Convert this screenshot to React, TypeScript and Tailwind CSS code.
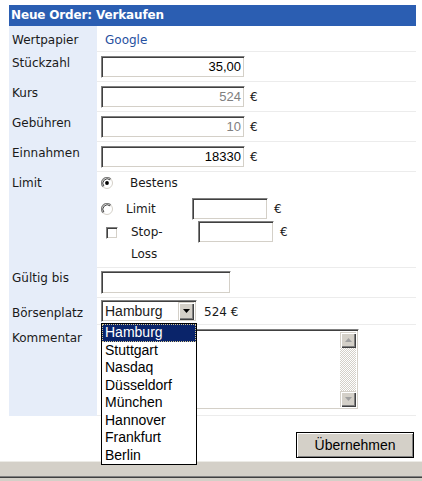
import React from 'react';

// classic inset text box
const Box = ({ className, children }: { className: string; children?: React.ReactNode }) => (
  <div
    className={`border border-t-[#808080] border-l-[#808080] border-b-white border-r-white bg-white shadow-[inset_1px_1px_0_#404040,inset_-1px_-1px_0_#d4d0c8] ${className}`}
  >
    {children}
  </div>
);

const Radio = ({ checked }: { checked?: boolean }) => (
  <svg width="12" height="12" viewBox="0 0 12 12" className="shrink-0">
    <circle cx="6" cy="6" r="5.5" fill="#fff" stroke="#d4d0c8" strokeWidth="1" />
    <path d="M2.1 9.9 A5.5 5.5 0 0 1 9.9 2.1" stroke="#808080" strokeWidth="1.2" fill="none" />
    <path d="M2.9 9.1 A4.4 4.4 0 0 1 9.1 2.9" stroke="#404040" strokeWidth="1" fill="none" />
    {checked && <circle cx="6" cy="6" r="1.9" fill="#000" />}
  </svg>
);

const Label = ({ text, pt }: { text: string; pt: string }) => (
  <div className={`bg-[#e6edf9] pl-[3px] leading-[14px] ${pt}`}>{text}</div>
);

const Arrow = ({ up, color }: { up?: boolean; color: string }) => (
  <svg width="7" height="4" viewBox="0 0 7 4">
    <path d={up ? 'M3.5 0 L7 4 L0 4 Z' : 'M0 0 L7 0 L3.5 4 Z'} fill={color} />
  </svg>
);

const SbButton = ({ up }: { up?: boolean }) => (
  <div className="h-[16px] w-[16px] bg-[#d4d0c8] flex items-center justify-center shadow-[inset_1px_1px_0_#d4d0c8,inset_2px_2px_0_#fff,inset_-1px_-1px_0_#404040,inset_-2px_-2px_0_#808080]">
    <Arrow up={up} color="#a0a0a0" />
  </div>
);

const places = ['Hamburg', 'Stuttgart', 'Nasdaq', 'Düsseldorf', 'München', 'Hannover', 'Frankfurt', 'Berlin'];

export default function App() {
  const num = "font-['Liberation_Sans',Arial,sans-serif] text-[13px] text-right pr-[3px] leading-[20px]";
  return (
    <div className="relative w-[422px] h-[481px] bg-white overflow-hidden font-['DejaVu_Sans',Verdana,sans-serif] text-[12px] text-[#1a1a1a]">
      <div className="ml-[9px] pt-[5px] w-[407px]">
        <div className="h-[21px] bg-[#2b5eb2] text-white font-bold pl-[2px] leading-[21px] tracking-[-0.15px]">
          Neue Order: Verkaufen
        </div>

        <div className="grid grid-cols-[88px_1fr]">
          {/* Wertpapier */}
          <Label text="Wertpapier" pt="pt-[7px]" />
          <div className="h-[26px] border-b border-[#ececec] pl-[8px] pt-[7px] leading-[14px] text-[#2750a0]">Google</div>

          {/* Stückzahl */}
          <Label text="Stückzahl" pt="pt-[4px]" />
          <div className="h-[30px] border-b border-[#ececec] pl-[4px] flex items-center">
            <Box className={`w-[144px] h-[22px] ${num} text-black`}>35,00</Box>
          </div>

          {/* Kurs */}
          <Label text="Kurs" pt="pt-[4px]" />
          <div className="h-[30px] border-b border-[#ececec] pl-[4px] flex items-center">
            <Box className={`w-[144px] h-[22px] ${num} text-[#808080]`}>524</Box>
            <span className="ml-[5px]">€</span>
          </div>

          {/* Gebühren */}
          <Label text="Gebühren" pt="pt-[4px]" />
          <div className="h-[30px] border-b border-[#ececec] pl-[4px] flex items-center">
            <Box className={`w-[144px] h-[22px] ${num} text-[#808080]`}>10</Box>
            <span className="ml-[5px]">€</span>
          </div>

          {/* Einnahmen */}
          <Label text="Einnahmen" pt="pt-[4px]" />
          <div className="h-[30px] border-b border-[#ececec] pl-[4px] flex items-center">
            <Box className={`w-[144px] h-[22px] ${num} text-black`}>18330</Box>
            <span className="ml-[5px]">€</span>
          </div>

          {/* Limit */}
          <Label text="Limit" pt="pt-[4px]" />
          <div className="h-[96px] border-b border-[#ececec] pt-[4px]">
            <div className="flex items-center h-[14px] pl-[4px]">
              <Radio checked />
              <span className="ml-[17px] leading-[14px]">Bestens</span>
            </div>
            <div className="flex items-center h-[22px] mt-[8px] pl-[4px]">
              <Radio />
              <span className="ml-[13px] w-[66px]">Limit</span>
              <Box className="w-[76px] h-[22px]" />
              <span className="ml-[6px]">€</span>
            </div>
            <div className="flex items-start mt-[1px] pl-[9px]">
              <Box className="mt-[6px] w-[12px] h-[12px] shrink-0" />
              <span className="ml-[13px] w-[67px] leading-[22px]">
                Stop-
                <br />
                Loss
              </span>
              <Box className="w-[76px] h-[22px]" />
              <span className="ml-[6px] leading-[22px]">€</span>
            </div>
          </div>

          {/* Gültig bis */}
          <Label text="Gültig bis" pt="pt-[3px]" />
          <div className="h-[30px] border-b border-[#ececec] pl-[4px] pt-[3px]">
            <Box className="w-[130px] h-[23px]" />
          </div>

          {/* Börsenplatz */}
          <Label text="Börsenplatz" pt="pt-[8px]" />
          <div className="h-[27px] border-b border-[#ececec] pl-[4px] pt-[2px] flex items-start">
            <Box className="w-[96px] h-[22px] flex items-center pl-[3px] pr-[2px]">
              <span className="flex-1 font-['Liberation_Sans',Arial,sans-serif] text-[14px] leading-[18px]">Hamburg</span>
              <div className="h-[18px] w-[16px] bg-[#d4d0c8] flex items-center justify-center shadow-[inset_1px_1px_0_#d4d0c8,inset_2px_2px_0_#fff,inset_-1px_-1px_0_#404040,inset_-2px_-2px_0_#808080]">
                <Arrow color="#000" />
              </div>
            </Box>
            <span className="ml-[7px] mt-[5px] leading-[14px]">524 €</span>
          </div>

          {/* Kommentar */}
          <Label text="Kommentar" pt="pt-[6px]" />
          <div className="h-[91px] border-b border-[#ececec] pl-[4px] pt-[4px]">
            <Box className="w-[258px] h-[81px] flex justify-end p-[2px]">
              <div className="w-[16px] flex flex-col">
                <SbButton up />
                <div className="flex-1 bg-[image:repeating-conic-gradient(#d4d0c8_0_25%,#fff_0_50%)] bg-[length:2px_2px]" />
                <SbButton />
              </div>
            </Box>
          </div>
        </div>

        <div className="flex justify-end pr-[2px] mt-[16px]">
          <button className="w-[118px] h-[26px] bg-[#d4d0c8] border border-black shadow-[inset_1px_1px_0_#fff,inset_-1px_-1px_0_#808080,inset_-2px_-2px_0_#d4d0c8] font-['Liberation_Sans',Arial,sans-serif] text-[14px] text-black">
            Übernehmen
          </button>
        </div>
      </div>

      {/* bottom window bar */}
      <div className="mt-[3px] h-[20px] bg-[#d4d0c8] border-t border-[#ecebe6] flex flex-col">
        <div className="h-[14px]" />
        <div className="h-[1px] bg-[#808080]" />
        <div className="h-[1px] bg-[#404040]" />
      </div>

      {/* open select list */}
      <div className="absolute left-[101px] top-[323px] w-[96px] h-[142px] border border-black bg-white font-['Liberation_Sans',Arial,sans-serif] text-[14px] text-black">
        {places.map((p, i) => (
          <div
            key={p}
            className={
              i === 0
                ? 'h-[17.5px] leading-[15.5px] pl-[2px] bg-[#0a246a] text-white border border-dotted border-[#d8c890]'
                : 'h-[17.5px] leading-[17.5px] pl-[3px]'
            }
          >
            {p}
          </div>
        ))}
      </div>
    </div>
  );
}
